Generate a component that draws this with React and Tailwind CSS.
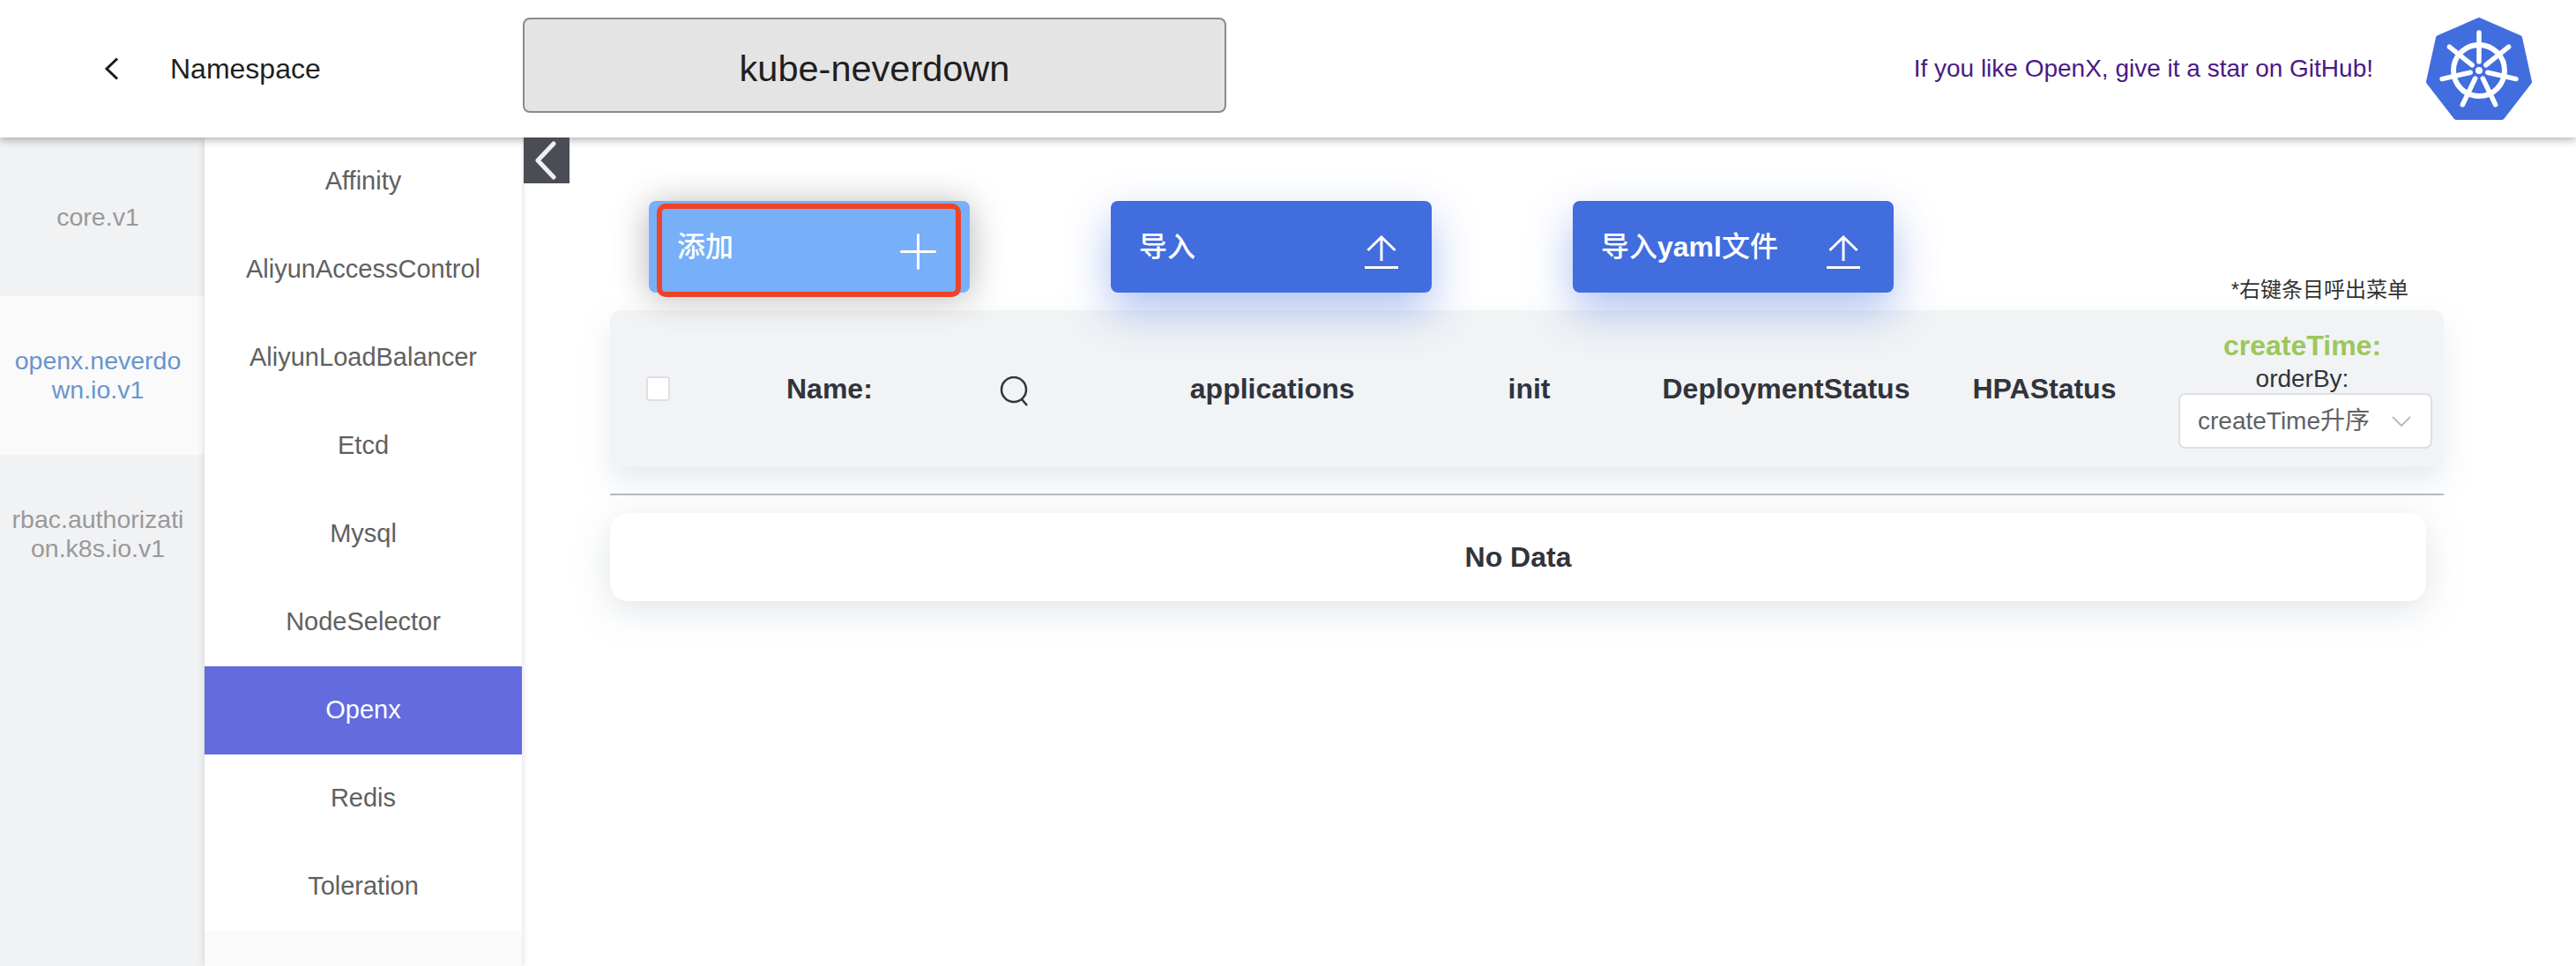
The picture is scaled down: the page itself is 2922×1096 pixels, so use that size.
const sans = { fontFamily: '"Liberation Sans", "Noto Sans CJK SC", sans-serif' };

const resources = ["Affinity", "AliyunAccessControl", "AliyunLoadBalancer", "Etcd", "Mysql", "NodeSelector", "Openx", "Redis", "Toleration"];
const groups = [
  { name: "core.v1" },
  { name: "openx.neverdown.io.v1", active: true },
  { name: "rbac.authorization.k8s.io.v1" },
];
const spokes = [0, 51.43, 102.86, 154.29, 205.71, 257.14, 308.57];

function KubeLogo() {
  return (
    <svg width="120" height="116" viewBox="0 0 120 116" className="block">
      <path d="M60 3 L106 23 L117 73 L86 113 L34 113 L3 73 L14 23 Z" fill="#416dde" stroke="#416dde" strokeWidth="6" strokeLinejoin="round" />
      <circle cx="60" cy="60" r="29" fill="none" stroke="#fff" strokeWidth="6" />
      {spokes.map((a) => (
        <line key={a} x1="60" y1="50" x2="60" y2="17" stroke="#fff" strokeWidth="5.5" strokeLinecap="round" transform={`rotate(${a} 60 60)`} />
      ))}
      <circle cx="60" cy="60" r="4" fill="#fff" />
    </svg>
  );
}

function UploadIcon() {
  return (
    <svg width="38" height="38" viewBox="0 0 38 38" fill="none" stroke="#fff" strokeWidth="3" className="mt-[12px] block">
      <path d="M19 29V2M3.5 17L19 2L34.5 17M0 36.5H38" />
    </svg>
  );
}

function ActionButton({ label, hover, children }) {
  return (
    <div
      className={`flex h-[104px] w-[364px] items-center justify-between rounded-lg pl-[32px] pr-[38px] ${
        hover ? "bg-[#78aff9] shadow-[0_4px_40px_rgba(0,0,0,0.3)]" : "bg-[#416dde] shadow-[0_20px_50px_rgba(65,109,222,0.42)]"
      }`}
    >
      <span className="text-[32px] font-medium text-white">{label}</span>
      {children}
    </div>
  );
}

export default function App() {
  return (
    <div className="flex h-screen flex-col overflow-hidden bg-white" style={sans}>
      {/* Header */}
      <header className="relative z-20 flex h-[156px] shrink-0 items-center bg-white shadow-[0_2px_10px_rgba(0,0,0,0.35)]">
        <svg width="18" height="26" viewBox="0 0 18 26" fill="none" stroke="#1a1a1a" strokeWidth="3" className="ml-[118px]">
          <path d="M15 1.5L3 13L15 24.5" />
        </svg>
        <span className="ml-[57px] w-[400px] text-[32px] text-[#1f1f1f]">Namespace</span>
        <div className="-mt-[8px] flex h-[108px] w-[798px] items-center justify-center rounded-lg border-2 border-[#8a8a8a] bg-[#e4e4e4] pt-[8px] text-[41.5px] text-[#1f1f1f]">
          kube-neverdown
        </div>
        <span className="ml-auto text-[28px] text-[#4a1a86]">If you like OpenX, give it a star on GitHub!</span>
        <div className="ml-[60px] mr-[50px]">
          <KubeLogo />
        </div>
      </header>

      <div className="flex min-h-0 flex-1">
        {/* API groups */}
        <nav className="w-[232px] shrink-0 bg-[#f1f2f4]">
          {groups.map((g) => (
            <div
              key={g.name}
              className={`flex h-[180px] items-center text-center text-[28.5px] leading-[33px] break-all ${
                g.active ? "bg-[#fafafa] text-[#6a94cf]" : "text-[#999999]"
              }`}
            >
              <span className="ml-[11px] w-[200px]">{g.name}</span>
            </div>
          ))}
        </nav>

        {/* Resources */}
        <nav className="relative z-10 w-[360px] shrink-0 bg-[#fafafa] shadow-[0_0_8px_rgba(0,0,0,0.15)]">
          {resources.map((r) => (
            <div
              key={r}
              className={`flex h-[100px] items-center justify-center text-[29px] ${
                r === "Openx" ? "bg-[#636bde] text-white" : "bg-white text-[#606060]"
              }`}
            >
              {r}
            </div>
          ))}
        </nav>

        {/* Main */}
        <main className="relative min-w-0 flex-1 pl-[100px] pr-[150px] pt-[72px]">
          <button className="absolute left-[2px] top-0 z-20 flex h-[52px] w-[52px] items-center justify-center bg-[#4a4d55]">
            <svg width="28" height="44" viewBox="0 0 28 44" fill="none" stroke="#f0f0f0" strokeWidth="5" strokeLinecap="round" strokeLinejoin="round">
              <path d="M22 3L4 22L22 41" />
            </svg>
          </button>

          <div className="relative z-10 mb-[20px] flex items-end pl-[44px] pr-[40px]">
            <div className="relative">
              <ActionButton label="添加" hover>
                <svg width="41" height="41" viewBox="0 0 41 41" stroke="#fff" strokeWidth="3" strokeLinecap="round" className="mt-[11px] block">
                  <path d="M20.5 1.5V39.5M1.5 20.5H39.5" />
                </svg>
              </ActionButton>
              <div className="absolute -bottom-[5px] left-[9px] right-[10px] top-[3px] rounded-[10px] border-[6px] border-[#ee4328]" />
            </div>
            <div className="ml-[160px]">
              <ActionButton label="导入">
                <UploadIcon />
              </ActionButton>
            </div>
            <div className="ml-[160px]">
              <ActionButton label={<>导入<span className="font-bold">yaml</span>文件</>}>
                <UploadIcon />
              </ActionButton>
            </div>
            <span className="mb-[-13px] ml-auto text-[24px] leading-[32px] text-[#333333]">*右键条目呼出菜单</span>
          </div>

          {/* Table head */}
          <div className="relative flex h-[178px] items-center rounded-xl bg-[#f1f3f5] pl-[41px] pr-[13px] text-[32px] font-bold text-[#31343b] shadow-[0_16px_32px_rgba(160,175,190,0.25)]">
            <span className="h-[28px] w-[27px] rounded border-2 border-[#dcdfe6] bg-white" />
            <span className="ml-[132px]">Name:</span>
            <svg width="34" height="34" viewBox="0 0 34 34" fill="none" stroke="#31343b" strokeWidth="2.5" className="ml-[144px] mt-[6px]">
              <circle cx="16" cy="15" r="14" />
              <path d="M25 26L31 33" />
            </svg>
            <span className="ml-[182px]">applications</span>
            <span className="ml-[174px]">init</span>
            <span className="ml-[127px]">DeploymentStatus</span>
            <span className="ml-[71px]">HPAStatus</span>
            <div className="ml-auto flex w-[288px] flex-col items-center">
              <span className="mr-[7px] leading-[38px] text-[#9cc75c]">createTime:</span>
              <span className="mr-[7px] mt-[3px] text-[28px] font-normal leading-[32px]">orderBy:</span>
              <div className="flex h-[63px] w-full items-center justify-between rounded-lg border-2 border-[#dcdfe6] bg-white pl-[20px] pr-[22px] text-[28px] font-normal text-[#606266]">
                createTime升序
                <svg width="22" height="12" viewBox="0 0 22 12" fill="none" stroke="#b8bcc4" strokeWidth="2">
                  <path d="M1 1L11 11L21 1" />
                </svg>
              </div>
            </div>
          </div>

          <div className="mt-[30px] h-[2px] bg-[#b4bcc4]" />

          {/* Rows */}
          <div className="pt-[20px]">
            <div className="mr-[20px] flex h-[100px] items-center justify-center rounded-[20px] bg-white text-[32px] font-bold text-[#31343b] shadow-[0_10px_40px_rgba(150,165,180,0.3)]">
              No Data
            </div>
          </div>
        </main>
      </div>
    </div>
  );
}
